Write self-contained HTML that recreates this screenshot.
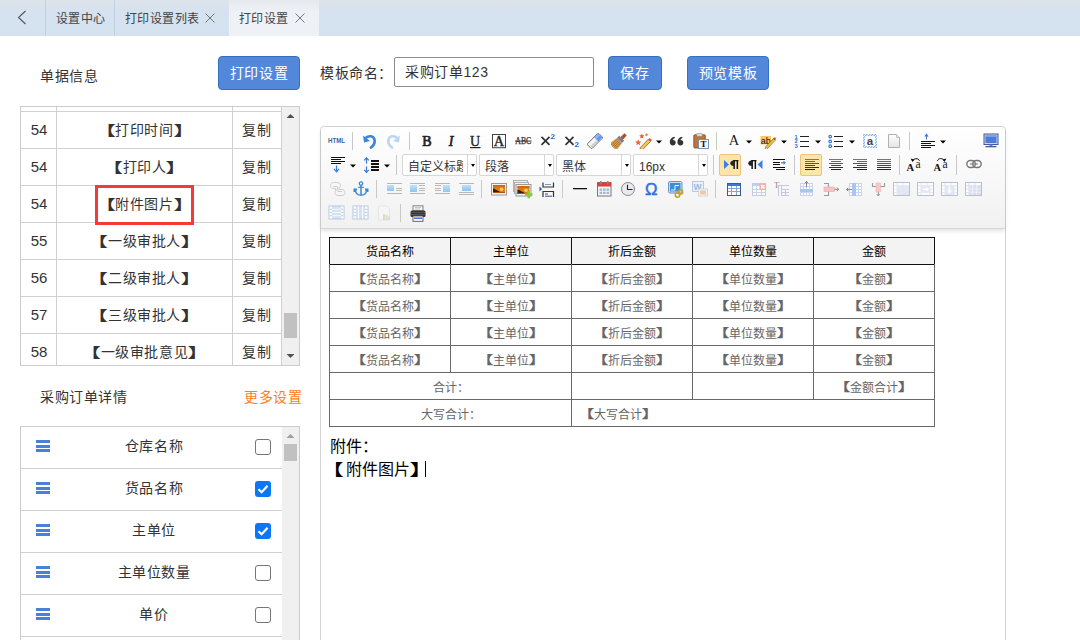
<!DOCTYPE html>
<html lang="zh-CN">
<head>
<meta charset="utf-8">
<style>
*{margin:0;padding:0;box-sizing:border-box}
html,body{width:1080px;height:640px;overflow:hidden;background:#fff;font-family:"Liberation Sans",sans-serif;font-size:14px;color:#333;letter-spacing:0.6px}
#tb,.sel,.th,.tdc,.att,svg{letter-spacing:0}
.abs{position:absolute}
#topbar{position:absolute;left:0;top:0;width:1080px;height:36px;background:linear-gradient(#dde3eb 0,#d6e2ef 12px,#d4e2f0 36px)}
.tab{position:absolute;top:1px;height:36px;line-height:36px;font-size:12px;letter-spacing:0.5px;color:#444;white-space:nowrap}
.sep{position:absolute;top:0;width:1px;height:36px;background:#c3d0de}
.btn{position:absolute;background:#5387d9;border:1px solid #3370bd;border-radius:4px;color:#fff;font-size:14px;font-weight:500;text-align:center}
#lt{position:absolute;left:20px;top:106px;width:280px;height:260px;border:1px solid #ccc;overflow:hidden}
.row{position:absolute;left:0;width:262px;height:37px;border-top:1px solid #d0d0d0}
.cell{position:absolute;top:0;height:36px;line-height:36px;text-align:center;font-size:14px;color:#333}
.vs{position:absolute;width:1px;background:#d0d0d0}
.sb{position:absolute;background:#f0f0f0}
#dt{position:absolute;left:20px;top:426px;width:280px;height:220px;border:1px solid #ccc;overflow:hidden}
.drow{position:absolute;left:0;width:262px;height:42px;border-bottom:1px solid #d0d0d0}
.ham{position:absolute;left:15px;width:14px;height:12px}
.ham i{position:absolute;left:0;width:14px;height:3px;background:#4b80d8}
.cb{position:absolute;left:234px;width:16px;height:16px;border-radius:3px}
.cb.off{border:1px solid #767676;background:#fff}
.cb.on{background:#0b76f7}
#ed{position:absolute;left:320px;top:126px;width:686px;height:530px;border:1px solid #d4d4d4;border-radius:4px;background:#fff}
#tb{position:absolute;left:0;top:0;width:684px;height:102px;border-bottom:1px solid #d8d8d8;background:linear-gradient(#fff,#f1f1f1);border-radius:4px 4px 0 0;box-shadow:0 2px 4px rgba(0,0,0,.12)}
table.t{position:absolute;left:9px;top:111px;border-collapse:collapse;table-layout:fixed}
table.t td{width:121px;height:27px;border:1px solid #666;text-align:center;font-size:12px;color:#555;padding:0}
table.t tr.h td{background:#f3f3f3;border-color:#000;font-weight:bold;color:#111;font-size:13px}
.sel{width:75px;height:22px;border:1px solid #d6d6d6;border-radius:2px;background:#fff;overflow:hidden}
.sel span{position:absolute;left:5px;top:1.5px;width:55px;height:20px;line-height:20px;font-size:12px;color:#333;white-space:nowrap;overflow:hidden}
.sel b{position:absolute;left:64px;top:0;width:10px;height:20px;border-left:1px solid #d6d6d6}
.sel b:after{content:"";position:absolute;left:3px;top:9px;border-left:2.5px solid transparent;border-right:2.5px solid transparent;border-top:3px solid #000}
.th{height:26px;line-height:29px;text-align:center;font-size:12px;font-weight:500;color:#000}
.tdc{height:26px;line-height:30px;text-align:center;font-size:12px;color:#666}
.att{font-size:16px;line-height:20px;color:#000;font-family:"Liberation Serif",serif}
</style>
</head>
<body>
<div id="topbar">
  <svg class="abs" style="left:16px;top:10px" width="12" height="16" viewBox="0 0 12 16"><path d="M9.5 1L2.5 7.5L9.5 14" fill="none" stroke="#555" stroke-width="1.1"/></svg>
  <div class="sep" style="left:45px"></div>
  <div class="tab" style="left:55.5px">设置中心</div>
  <div class="sep" style="left:114px"></div>
  <div class="tab" style="left:124.5px">打印设置列表</div>
  <svg class="abs" style="left:205px;top:13px" width="10" height="10"><path d="M0.5 0.5L9.5 9.5M9.5 0.5L0.5 9.5" stroke="#666" stroke-width="0.9"/></svg>
  <div class="abs" style="left:229px;top:0;width:90px;height:36px;background:linear-gradient(#e6e9ee 0,#eef1f6 12px,#eef2f7 36px)"></div>
  <div class="tab" style="left:238.5px">打印设置</div>
  <svg class="abs" style="left:295px;top:13px" width="10" height="10"><path d="M0.5 0.5L9.5 9.5M9.5 0.5L0.5 9.5" stroke="#666" stroke-width="0.9"/></svg>
</div>

<div class="abs" style="left:40px;top:65px;font-size:14px;color:#333">单据信息</div>
<div class="btn" style="left:218px;top:56px;width:82px;height:34px;line-height:32px">打印设置</div>
<div class="abs" style="left:320px;top:61.5px;font-size:14px;color:#333">模板命名：</div>
<div class="abs" style="left:394px;top:57px;width:200px;height:30px;border:1px solid #8a8a8a;border-radius:2px;padding-left:10px;line-height:28px;font-size:14px;color:#333">采购订单123</div>
<div class="btn" style="left:608px;top:56px;width:54px;height:34px;line-height:32px">保存</div>
<div class="btn" style="left:687px;top:56px;width:82px;height:34px;line-height:32px">预览模板</div>

<div id="lt">
<div class="vs" style="left:35px;top:0;height:260px"></div>
<div class="vs" style="left:211px;top:0;height:260px"></div>
<div class="vs" style="left:260px;top:0;height:260px"></div>
<div class="row" style="top:4px"><div class="cell" style="left:0.5px;width:35px;font-size:15px;line-height:35.5px;letter-spacing:0">54</div><div class="cell" style="left:36px;width:175px"><span style="display:inline-block;transform:scaleX(1.67);transform-origin:86% 50%">【</span>打印时间<span style="display:inline-block;transform:scaleX(1.67);transform-origin:7% 50%">】</span></div><div class="cell" style="left:212px;width:48px">复制</div></div>
<div class="row" style="top:41px"><div class="cell" style="left:0.5px;width:35px;font-size:15px;line-height:35.5px;letter-spacing:0">54</div><div class="cell" style="left:36px;width:175px"><span style="display:inline-block;transform:scaleX(1.67);transform-origin:86% 50%">【</span>打印人<span style="display:inline-block;transform:scaleX(1.67);transform-origin:7% 50%">】</span></div><div class="cell" style="left:212px;width:48px">复制</div></div>
<div class="row" style="top:78px"><div class="cell" style="left:0.5px;width:35px;font-size:15px;line-height:35.5px;letter-spacing:0">54</div><div class="cell" style="left:36px;width:175px"><span style="display:inline-block;transform:scaleX(1.67);transform-origin:86% 50%">【</span>附件图片<span style="display:inline-block;transform:scaleX(1.67);transform-origin:7% 50%">】</span></div><div class="cell" style="left:212px;width:48px">复制</div></div>
<div class="row" style="top:115px"><div class="cell" style="left:0.5px;width:35px;font-size:15px;line-height:35.5px;letter-spacing:0">55</div><div class="cell" style="left:36px;width:175px"><span style="display:inline-block;transform:scaleX(1.67);transform-origin:86% 50%">【</span>一级审批人<span style="display:inline-block;transform:scaleX(1.67);transform-origin:7% 50%">】</span></div><div class="cell" style="left:212px;width:48px">复制</div></div>
<div class="row" style="top:152px"><div class="cell" style="left:0.5px;width:35px;font-size:15px;line-height:35.5px;letter-spacing:0">56</div><div class="cell" style="left:36px;width:175px"><span style="display:inline-block;transform:scaleX(1.67);transform-origin:86% 50%">【</span>二级审批人<span style="display:inline-block;transform:scaleX(1.67);transform-origin:7% 50%">】</span></div><div class="cell" style="left:212px;width:48px">复制</div></div>
<div class="row" style="top:189px"><div class="cell" style="left:0.5px;width:35px;font-size:15px;line-height:35.5px;letter-spacing:0">57</div><div class="cell" style="left:36px;width:175px"><span style="display:inline-block;transform:scaleX(1.67);transform-origin:86% 50%">【</span>三级审批人<span style="display:inline-block;transform:scaleX(1.67);transform-origin:7% 50%">】</span></div><div class="cell" style="left:212px;width:48px">复制</div></div>
<div class="row" style="top:226px"><div class="cell" style="left:0.5px;width:35px;font-size:15px;line-height:35.5px;letter-spacing:0">58</div><div class="cell" style="left:36px;width:175px"><span style="display:inline-block;transform:scaleX(1.67);transform-origin:86% 50%">【</span>一级审批意见<span style="display:inline-block;transform:scaleX(1.67);transform-origin:7% 50%">】</span></div><div class="cell" style="left:212px;width:48px">复制</div></div>
<div class="sb" style="left:261px;top:0;width:17px;height:258px"></div>
<svg class="abs" style="left:265px;top:6px" width="9" height="6"><path d="M0.5 5L4.5 1L8.5 5Z" fill="#505050"/></svg>
<svg class="abs" style="left:265px;top:246px" width="9" height="6"><path d="M0.5 1L4.5 5L8.5 1Z" fill="#505050"/></svg>
<div class="abs" style="left:263px;top:206px;width:13px;height:25px;background:#c1c1c1"></div>
<div class="abs" style="left:74px;top:78px;width:99px;height:40px;border:3px solid #f53838"></div>
</div>

<div class="abs" style="left:40px;top:385.5px;font-size:14px;color:#333">采购订单详情</div>
<div class="abs" style="left:244px;top:385.5px;font-size:14px;color:#ff7d21">更多设置</div>

<div id="dt">
<div class="drow" style="top:0px"><div class="ham" style="top:13px"><i style="top:0"></i><i style="top:5px"></i><i style="top:9px"></i></div><div class="cell" style="left:35px;width:196px;height:41px;line-height:38px">仓库名称</div><div class="cb off" style="top:12px"></div></div>
<div class="drow" style="top:42px"><div class="ham" style="top:13px"><i style="top:0"></i><i style="top:5px"></i><i style="top:9px"></i></div><div class="cell" style="left:35px;width:196px;height:41px;line-height:38px">货品名称</div><div class="cb on" style="top:12px"><svg width="16" height="16" viewBox="0 0 16 16"><path d="M3.5 8.2L6.6 11.2L12.6 4.8" fill="none" stroke="#fff" stroke-width="2.2"/></svg></div></div>
<div class="drow" style="top:84px"><div class="ham" style="top:13px"><i style="top:0"></i><i style="top:5px"></i><i style="top:9px"></i></div><div class="cell" style="left:35px;width:196px;height:41px;line-height:38px">主单位</div><div class="cb on" style="top:12px"><svg width="16" height="16" viewBox="0 0 16 16"><path d="M3.5 8.2L6.6 11.2L12.6 4.8" fill="none" stroke="#fff" stroke-width="2.2"/></svg></div></div>
<div class="drow" style="top:126px"><div class="ham" style="top:13px"><i style="top:0"></i><i style="top:5px"></i><i style="top:9px"></i></div><div class="cell" style="left:35px;width:196px;height:41px;line-height:38px">主单位数量</div><div class="cb off" style="top:12px"></div></div>
<div class="drow" style="top:168px"><div class="ham" style="top:13px"><i style="top:0"></i><i style="top:5px"></i><i style="top:9px"></i></div><div class="cell" style="left:35px;width:196px;height:41px;line-height:38px">单价</div><div class="cb off" style="top:12px"></div></div>
<div class="drow" style="top:210px"></div>
<div class="sb" style="left:261px;top:0;width:17px;height:230px"></div>
<svg class="abs" style="left:265px;top:6px" width="9" height="6"><path d="M0.5 5L4.5 1L8.5 5Z" fill="#a0a0a0"/></svg>
<div class="abs" style="left:263px;top:17px;width:13px;height:17px;background:#c1c1c1"></div>
</div>

<div id="ed">
  <div id="tb"></div>
</div>
<svg class="abs" style="left:327px;top:133px" width="19" height="16" viewBox="0 0 19 16"><text x="1" y="10.2" font-family="Liberation Sans" font-weight="bold" font-size="7.2" fill="#2c69b0" textLength="17" lengthAdjust="spacingAndGlyphs">HTML</text></svg>
<div class="abs" style="left:352px;top:132px;width:1px;height:18px;background:#c8c8c8"></div>
<svg class="abs" style="left:361px;top:133px" width="16" height="16" viewBox="0 0 16 16"><path d="M4.5 5.2C7.5 2.2 12.8 2.6 13.6 7C14.2 10.4 12 13 10 14.6" fill="none" stroke="#3b86da" stroke-width="2.6" stroke-linecap="round"/><path d="M2 2.5L3 9.5L9 8Z" fill="#3b86da"/></svg>
<svg class="abs" style="left:386px;top:133px" width="16" height="16" viewBox="0 0 16 16"><path d="M11.5 5.2C8.5 2.2 3.2 2.6 2.4 7C1.8 10.4 4 13 6 14.6" fill="none" stroke="#bcd7f2" stroke-width="2.6" stroke-linecap="round"/><path d="M14 2.5L13 9.5L7 8Z" fill="#bcd7f2"/></svg>
<div class="abs" style="left:409px;top:132px;width:1px;height:18px;background:#c8c8c8"></div>
<svg class="abs" style="left:419px;top:133px" width="16" height="16" viewBox="0 0 16 16"><text x="8" y="13" text-anchor="middle" font-family="Liberation Serif" font-size="14" stroke="#222" stroke-width="0.7" fill="#222">B</text></svg>
<svg class="abs" style="left:443px;top:133px" width="16" height="16" viewBox="0 0 16 16"><text x="8" y="13" text-anchor="middle" font-family="Liberation Serif" font-style="italic" font-size="14" stroke="#222" stroke-width="0.6" fill="#222">I</text></svg>
<svg class="abs" style="left:467px;top:133px" width="16" height="16" viewBox="0 0 16 16"><text x="8" y="12.6" text-anchor="middle" font-family="Liberation Serif" font-size="14" stroke="#222" stroke-width="0.35" fill="#222">U</text><rect x="3" y="14" width="10.5" height="1.2" fill="#222"/></svg>
<svg class="abs" style="left:491px;top:133px" width="16" height="16" viewBox="0 0 16 16"><rect x="1.5" y="1.5" width="13" height="13.2" fill="none" stroke="#444" stroke-width="1"/><text x="8" y="13" text-anchor="middle" font-family="Liberation Serif" font-size="14.5" stroke="#222" stroke-width="0.35" fill="#222">A</text></svg>
<svg class="abs" style="left:515px;top:133px" width="17" height="16" viewBox="0 0 17 16"><text x="0.3" y="11.4" font-family="Liberation Serif" font-size="9.5" stroke="#333" stroke-width="0.25" fill="#333" textLength="16" lengthAdjust="spacingAndGlyphs">ABC</text><rect x="0" y="7.6" width="16.5" height="1" fill="#333"/></svg>
<svg class="abs" style="left:539px;top:133px" width="18" height="16" viewBox="0 0 18 16"><path d="M2.5 3.8L10.5 11.8M10.5 3.8L2.5 11.8" stroke="#333" stroke-width="1.7"/><text x="11.6" y="5.8" font-family="Liberation Sans" font-weight="bold" font-size="8" fill="#1e6fe0">2</text></svg>
<svg class="abs" style="left:563px;top:133px" width="18" height="16" viewBox="0 0 18 16"><path d="M2.5 3.8L10.5 11.8M10.5 3.8L2.5 11.8" stroke="#333" stroke-width="1.7"/><text x="11.6" y="14.3" font-family="Liberation Sans" font-weight="bold" font-size="8" fill="#1e6fe0">2</text></svg>
<svg class="abs" style="left:587px;top:133px" width="16" height="16" viewBox="0 0 16 16"><g transform="rotate(-45 8 8)"><rect x="0" y="4.6" width="16" height="6.6" rx="1" fill="#f4f4f4" stroke="#5e6270" stroke-width="0.9"/><rect x="10" y="5.1" width="5.5" height="5.6" fill="#5a9af0"/><rect x="10" y="5.1" width="5.5" height="2.6" fill="#8ab8f8"/><rect x="1" y="8.5" width="9" height="2.2" fill="#d0d0d0"/></g></svg>
<svg class="abs" style="left:611px;top:133px" width="16" height="16" viewBox="0 0 16 16"><g transform="rotate(45 8 8)"><rect x="6.3" y="-1.5" width="3.4" height="6" rx="0.8" fill="#a8582a"/><rect x="4.5" y="4.2" width="7" height="3.3" fill="#6a7088"/><path d="M5.3 5H10.7M5.3 6.6H10.7" stroke="#c8ccd8" stroke-width="0.6" stroke-dasharray="0.8 0.8"/><path d="M4.3 7.5H11.7L13 16.5H3Z" fill="#d8a050"/><path d="M5.5 8V16M7.2 8V16.5M8.8 8V16.5M10.5 8V16" stroke="#9a5a20" stroke-width="0.7"/></g></svg>
<svg class="abs" style="left:635px;top:133px" width="17" height="16" viewBox="0 0 17 16"><path d="M4.8 15.2L13.2 6.3L15.6 8.5L7.2 17Z" fill="#f4c450" stroke="#7a5a20" stroke-width="0.7"/><path d="M13.2 6.3L14.6 4.9L17 7.1L15.6 8.5Z" fill="#e85050"/><polygon points="3.20,6.30 4.07,8.40 6.34,8.58 4.61,10.06 5.14,12.27 3.20,11.08 1.26,12.27 1.79,10.06 0.06,8.58 2.33,8.40" fill="#f0602a"/><polygon points="6.80,0.40 7.54,2.18 9.46,2.33 8.00,3.59 8.45,5.47 6.80,4.46 5.15,5.47 5.60,3.59 4.14,2.33 6.06,2.18" fill="#e8562a"/><polygon points="11.50,-0.10 12.00,1.11 13.31,1.21 12.31,2.06 12.62,3.34 11.50,2.66 10.38,3.34 10.69,2.06 9.69,1.21 11.00,1.11" fill="#f07a50"/></svg>
<svg class="abs" style="left:656px;top:140px" width="6" height="4" viewBox="0 0 6 4"><path d="M0 0.5H6L3 3.5Z" fill="#000"/></svg>
<svg class="abs" style="left:669px;top:133px" width="16" height="16" viewBox="0 0 16 16"><g fill="#333"><path d="M5 3.8C2.4 4.6 0.8 6.6 0.8 9C0.8 11.2 2.1 12.4 3.8 12.4C5.4 12.4 6.7 11.3 6.7 9.7C6.7 8.2 5.6 7.1 4.2 7.1L3.7 7.15C4 6.1 4.9 5.2 6.2 4.7Z"/><path d="M12.6 3.8C10 4.6 8.4 6.6 8.4 9C8.4 11.2 9.7 12.4 11.4 12.4C13 12.4 14.3 11.3 14.3 9.7C14.3 8.2 13.2 7.1 11.8 7.1L11.3 7.15C11.6 6.1 12.5 5.2 13.8 4.7Z"/></g></svg>
<svg class="abs" style="left:693px;top:133px" width="16" height="16" viewBox="0 0 16 16"><rect x="0.8" y="1.8" width="11.5" height="13.2" rx="1" fill="#c0743a" stroke="#7a4a20" stroke-width="0.8"/><rect x="3.8" y="0.5" width="5.5" height="2.8" rx="0.6" fill="#e0e0e0" stroke="#888" stroke-width="0.6"/><rect x="5.5" y="6.5" width="10" height="9" fill="#f6f8fc" stroke="#6a88b8" stroke-width="0.9"/><text x="10.5" y="14.3" text-anchor="middle" font-family="Liberation Serif" font-weight="bold" font-size="9" fill="#111">T</text></svg>
<div class="abs" style="left:716px;top:132px;width:1px;height:18px;background:#c8c8c8"></div>
<svg class="abs" style="left:726px;top:133px" width="16" height="16" viewBox="0 0 16 16"><text x="8" y="12" text-anchor="middle" font-family="Liberation Serif" font-size="14.5" fill="#222">A</text></svg>
<svg class="abs" style="left:746px;top:140px" width="6" height="4" viewBox="0 0 6 4"><path d="M0 0.5H6L3 3.5Z" fill="#000"/></svg>
<svg class="abs" style="left:760px;top:133px" width="17" height="16" viewBox="0 0 17 16"><rect x="0.5" y="3" width="10.5" height="8.5" fill="#fbc56a"/><text x="0.8" y="10.6" font-family="Liberation Sans" font-size="8.8" fill="#111" textLength="10" lengthAdjust="spacingAndGlyphs">ab</text><path d="M5.5 13.8L13.5 5.5L15.3 7.3L7.3 15.6Z" fill="#f0c040" stroke="#6a5a30" stroke-width="0.6"/><circle cx="14.6" cy="5.8" r="1.3" fill="#e03838"/><path d="M5.2 14.2L4.5 15.8L6.2 15.3Z" fill="#333"/></svg>
<svg class="abs" style="left:781px;top:140px" width="6" height="4" viewBox="0 0 6 4"><path d="M0 0.5H6L3 3.5Z" fill="#000"/></svg>
<svg class="abs" style="left:794px;top:133px" width="16" height="16" viewBox="0 0 16 16"><text x="0.5" y="5.6" font-family="Liberation Sans" font-weight="bold" font-size="5.8" fill="#2a70e0">1</text><text x="0.5" y="10.4" font-family="Liberation Sans" font-weight="bold" font-size="5.8" fill="#2a70e0">2</text><text x="0.5" y="15.2" font-family="Liberation Sans" font-weight="bold" font-size="5.8" fill="#2a70e0">3</text><g shape-rendering="crispEdges" fill="#222"><rect x="6" y="3" width="9" height="1.2"/><rect x="6" y="8" width="9" height="1.2"/><rect x="6" y="13" width="9" height="1.2"/></g></svg>
<svg class="abs" style="left:815px;top:140px" width="6" height="4" viewBox="0 0 6 4"><path d="M0 0.5H6L3 3.5Z" fill="#000"/></svg>
<svg class="abs" style="left:828px;top:133px" width="16" height="16" viewBox="0 0 16 16"><circle cx="2.2" cy="3.6" r="1.3" fill="none" stroke="#2a70e0" stroke-width="1.1"/><circle cx="2.2" cy="8.4" r="1.3" fill="none" stroke="#2a70e0" stroke-width="1.1"/><circle cx="2.2" cy="13.2" r="1.3" fill="none" stroke="#2a70e0" stroke-width="1.1"/><g shape-rendering="crispEdges" fill="#222"><rect x="6" y="3" width="9" height="1.2"/><rect x="6" y="8" width="9" height="1.2"/><rect x="6" y="13" width="9" height="1.2"/></g></svg>
<svg class="abs" style="left:849px;top:140px" width="6" height="4" viewBox="0 0 6 4"><path d="M0 0.5H6L3 3.5Z" fill="#000"/></svg>
<svg class="abs" style="left:862px;top:133px" width="16" height="16" viewBox="0 0 16 16"><defs><pattern id="hatch" width="2" height="2" patternUnits="userSpaceOnUse" patternTransform="rotate(45)"><rect width="1" height="2" fill="#7aa8ec"/></pattern></defs><path d="M1 1H15V15H1Z M3 3V13H13V3Z" fill="url(#hatch)" fill-rule="evenodd"/><text x="8" y="12" text-anchor="middle" font-family="Liberation Sans" font-weight="bold" font-size="11.5" fill="#444">a</text></svg>
<svg class="abs" style="left:886px;top:133px" width="16" height="16" viewBox="0 0 16 16"><defs><linearGradient id="pg" x1="0" y1="0" x2="0" y2="1"><stop offset="0" stop-color="#fff"/><stop offset="1" stop-color="#e4e4e4"/></linearGradient></defs><path d="M2.5 1.5H10.5L13.5 4.5V14.5H2.5Z" fill="url(#pg)" stroke="#a8a8a8" stroke-width="0.9"/><path d="M10.5 1.5V4.5H13.5" fill="#eee" stroke="#b8b8b8" stroke-width="0.8"/></svg>
<div class="abs" style="left:909px;top:132px;width:1px;height:18px;background:#c8c8c8"></div>
<svg class="abs" style="left:920px;top:133px" width="16" height="16" viewBox="0 0 16 16"><path d="M6.5 1V6.5" stroke="#3a78e0" stroke-width="1.1"/><path d="M4.3 3.6L6.5 0.5L8.7 3.6Z" fill="#3a78e0"/><g shape-rendering="crispEdges"><rect x="1" y="8" width="14" height="1" fill="#111"/><rect x="1" y="10" width="10" height="1" fill="#111"/><rect x="1" y="12" width="14" height="1.2" fill="#111"/><rect x="1" y="14" width="10" height="1.2" fill="#111"/></g></svg>
<svg class="abs" style="left:940px;top:140px" width="6" height="4" viewBox="0 0 6 4"><path d="M0 0.5H6L3 3.5Z" fill="#000"/></svg>
<svg class="abs" style="left:983px;top:133px" width="16" height="16" viewBox="0 0 16 16"><rect x="1" y="1" width="14" height="10.5" fill="#c8d4ec" stroke="#3c5a9c" stroke-width="1"/><rect x="2.5" y="2.5" width="11" height="7.5" fill="#4f7ad8"/><rect x="2.5" y="2.5" width="11" height="1.5" fill="#7aa0ec"/><rect x="6.5" y="11.5" width="3" height="1.5" fill="#6a80b0"/><rect x="2.5" y="13" width="11" height="1.3" fill="#3c5a9c"/></svg>
<svg class="abs" style="left:331px;top:157px" width="16" height="16" viewBox="0 0 16 16"><g shape-rendering="crispEdges"><rect x="0" y="0" width="14" height="1" fill="#111"/><rect x="0" y="2" width="10" height="1" fill="#111"/><rect x="0" y="4" width="14" height="1" fill="#111"/><rect x="0" y="6" width="10" height="1" fill="#111"/></g><path d="M5.5 8.5V14.5" stroke="#3a7ae0" stroke-width="1.2"/><path d="M3 11.8L5.5 14.8L8 11.8" fill="none" stroke="#3a7ae0" stroke-width="1.2"/></svg>
<svg class="abs" style="left:350px;top:164px" width="6" height="4" viewBox="0 0 6 4"><path d="M0 0.5H6L3 3.5Z" fill="#000"/></svg>
<svg class="abs" style="left:363px;top:157px" width="17" height="17" viewBox="0 0 17 17"><g shape-rendering="crispEdges"><rect x="8" y="3" width="8" height="1.5" fill="#111"/><rect x="8" y="6" width="8" height="1.5" fill="#111"/><rect x="8" y="9" width="8" height="1.5" fill="#111"/><rect x="8" y="12" width="8" height="1.5" fill="#111"/></g><path d="M3.5 1V6.5M3.5 9.5V15.5" stroke="#3a7ae0" stroke-width="1.2"/><path d="M1.2 3.4L3.5 0.8L5.8 3.4M1.2 12.8L3.5 15.4L5.8 12.8" fill="none" stroke="#3a7ae0" stroke-width="1.2"/></svg>
<svg class="abs" style="left:384px;top:164px" width="6" height="4" viewBox="0 0 6 4"><path d="M0 0.5H6L3 3.5Z" fill="#000"/></svg>
<div class="abs" style="left:396px;top:155px;width:1px;height:20px;background:#c8c8c8"></div>
<div class="abs sel" style="left:402px;top:154px"><span>自定义标题</span><b></b></div>
<div class="abs sel" style="left:479px;top:154px"><span>段落</span><b></b></div>
<div class="abs sel" style="left:556px;top:154px"><span>黑体</span><b></b></div>
<div class="abs sel" style="left:633px;top:154px"><span>16px</span><b></b></div>
<div class="abs" style="left:713px;top:155px;width:1px;height:20px;background:#c8c8c8"></div>
<div class="abs" style="left:719px;top:154px;width:22px;height:22px;background:#fde4a8;border:1px solid #f1c37a;border-radius:2px"></div>
<svg class="abs" style="left:724px;top:160px" width="16" height="10" viewBox="0 0 16 10"><path d="M0 0L5 4.5L0 9Z" fill="#3a80e8"/><g transform="translate(6,0)"><path d="M3.8 0.5C1.2 0.5 0.3 2 0.3 3.3C0.3 4.9 1.5 6 3.8 6Z" fill="#222"/><rect x="3.4" y="0" width="5" height="1.3" fill="#222"/><rect x="3.4" y="0" width="1.5" height="9" fill="#111"/><rect x="6.6" y="0" width="1.5" height="9" fill="#111"/></g></svg>
<svg class="abs" style="left:748px;top:160px" width="16" height="10" viewBox="0 0 16 10"><g transform="translate(0,0)"><path d="M3.8 0.5C1.2 0.5 0.3 2 0.3 3.3C0.3 4.9 1.5 6 3.8 6Z" fill="#222"/><rect x="3.4" y="0" width="5" height="1.3" fill="#222"/><rect x="3.4" y="0" width="1.5" height="9" fill="#111"/><rect x="6.6" y="0" width="1.5" height="9" fill="#111"/></g><path d="M14.5 0L9.5 4.5L14.5 9Z" fill="#3a80e8"/></svg>
<svg class="abs" style="left:773px;top:159px" width="14" height="12" viewBox="0 0 14 12"><g shape-rendering="crispEdges"><rect x="0" y="0" width="12" height="1" fill="#111"/><rect x="0" y="2.5" width="7" height="1" fill="#111"/><rect x="0" y="5" width="7" height="1" fill="#111"/><rect x="0" y="7.5" width="12" height="1" fill="#111"/><rect x="3" y="10" width="9" height="1" fill="#111"/></g><path d="M8 3.8H11.5" stroke="#3a80e8" stroke-width="1.2"/><path d="M10.5 1.8L13 3.8L10.5 5.8Z" fill="#3a80e8"/></svg>
<div class="abs" style="left:794px;top:155px;width:1px;height:20px;background:#c8c8c8"></div>
<div class="abs" style="left:800px;top:154px;width:22px;height:22px;background:#fde4a8;border:1px solid #f1c37a;border-radius:2px"></div>
<svg class="abs" style="left:805px;top:159px" width="14" height="12" viewBox="0 0 14 12"><g shape-rendering="crispEdges"><rect x="0" y="0" width="14" height="1" fill="#777"/><rect x="0" y="2" width="10" height="1" fill="#666"/><rect x="0" y="4" width="14" height="1" fill="#555"/><rect x="0" y="6" width="10" height="1" fill="#444"/><rect x="0" y="8" width="14" height="1" fill="#333"/><rect x="0" y="10" width="10" height="1" fill="#222"/></g></svg>
<svg class="abs" style="left:829px;top:159px" width="14" height="12" viewBox="0 0 14 12"><g shape-rendering="crispEdges"><rect x="0" y="0" width="14" height="1" fill="#777"/><rect x="2" y="2" width="10" height="1" fill="#666"/><rect x="0" y="4" width="14" height="1" fill="#555"/><rect x="2" y="6" width="10" height="1" fill="#444"/><rect x="0" y="8" width="14" height="1" fill="#333"/><rect x="2" y="10" width="10" height="1" fill="#222"/></g></svg>
<svg class="abs" style="left:853px;top:159px" width="14" height="12" viewBox="0 0 14 12"><g shape-rendering="crispEdges"><rect x="0" y="0" width="14" height="1" fill="#777"/><rect x="4" y="2" width="10" height="1" fill="#666"/><rect x="0" y="4" width="14" height="1" fill="#555"/><rect x="4" y="6" width="10" height="1" fill="#444"/><rect x="0" y="8" width="14" height="1" fill="#333"/><rect x="4" y="10" width="10" height="1" fill="#222"/></g></svg>
<svg class="abs" style="left:877px;top:159px" width="14" height="12" viewBox="0 0 14 12"><g shape-rendering="crispEdges"><rect x="0" y="0" width="14" height="1" fill="#777"/><rect x="0" y="2" width="14" height="1" fill="#666"/><rect x="0" y="4" width="14" height="1" fill="#555"/><rect x="0" y="6" width="14" height="1" fill="#444"/><rect x="0" y="8" width="14" height="1" fill="#333"/><rect x="0" y="10" width="14" height="1" fill="#222"/></g></svg>
<div class="abs" style="left:899px;top:155px;width:1px;height:20px;background:#c8c8c8"></div>
<svg class="abs" style="left:906px;top:156px" width="17" height="16" viewBox="0 0 17 16"><text x="0.5" y="14.5" font-family="Liberation Serif" font-weight="bold" font-size="10.5" fill="#111">A</text><text x="9.6" y="12.3" font-family="Liberation Serif" font-size="11.5" fill="#111">a</text><path d="M7 4.8C7.5 2.2 12.5 1.8 13.5 4.8" fill="none" stroke="#111" stroke-width="1"/><path d="M4.5 2.5L6.5 6L8.5 3.5Z" fill="#111"/></svg>
<svg class="abs" style="left:933px;top:156px" width="17" height="16" viewBox="0 0 17 16"><text x="0.5" y="14.5" font-family="Liberation Serif" font-weight="bold" font-size="10.5" fill="#111">A</text><text x="9.6" y="12.3" font-family="Liberation Serif" font-size="11.5" fill="#111">a</text><path d="M4.5 4.8C5 2 10 1.8 11 4.5" fill="none" stroke="#111" stroke-width="1"/><path d="M9.5 3.5L11.5 6L13.5 2.5Z" fill="#111"/></svg>
<div class="abs" style="left:956px;top:155px;width:1px;height:20px;background:#c8c8c8"></div>
<svg class="abs" style="left:966px;top:159px" width="16" height="10" viewBox="0 0 16 10"><rect x="0.8" y="1.5" width="8.5" height="7" rx="3.5" fill="none" stroke="#777" stroke-width="1.4"/><rect x="6.7" y="1.5" width="8.5" height="7" rx="3.5" fill="none" stroke="#777" stroke-width="1.4"/><path d="M4 5H12" stroke="#888" stroke-width="1.2"/></svg>
<svg class="abs" style="left:330px;top:181px" width="16" height="16" viewBox="0 0 16 16"><g fill="none" stroke="#cdcdcd" stroke-width="1"><path d="M5.5 7.5H3.5C1.8 7.5 0.5 6.2 0.5 4.5C0.5 2.8 1.8 1.5 3.5 1.5H7.5C9.2 1.5 10.5 2.8 10.5 4.5C10.5 6.2 9.2 7.5 7.5 7.5"/><path d="M7.5 7.5V5.5H3.5M5.5 7.5V9.5"/><path d="M9.5 8.5H12C13.7 8.5 15 9.8 15 11.5C15 13.2 13.7 14.5 12 14.5H8C6.3 14.5 5 13.2 5 11.5C5 9.8 6.3 8.5 8 8.5"/><path d="M8 8.5V10.5H12M9.5 8.5V7.5"/></g></svg>
<svg class="abs" style="left:353px;top:181px" width="16" height="16" viewBox="0 0 16 16"><circle cx="8" cy="2.6" r="1.7" fill="none" stroke="#3a86da" stroke-width="1.3"/><path d="M8 4.3V14" stroke="#3a86da" stroke-width="1.5"/><path d="M5 6.3H11" stroke="#3a86da" stroke-width="1.1"/><path d="M2.3 9C2.8 12.3 5 14.3 8 14.3C11 14.3 13.2 12.3 13.7 9" fill="none" stroke="#4a90e0" stroke-width="1.6"/><path d="M0.5 7.5H4V9.5H2.5V11H0.5Z M15.5 7.5H12V9.5H13.5V11H15.5Z" fill="#3a86da"/></svg>
<div class="abs" style="left:376px;top:180px;width:1px;height:18px;background:#c8c8c8"></div>
<svg class="abs" style="left:387px;top:181px" width="16" height="16" viewBox="0 0 16 16"><defs><linearGradient id="ig" x1="0" y1="0" x2="0" y2="1"><stop offset="0" stop-color="#c4e2fa"/><stop offset="1" stop-color="#8ec4ee"/></linearGradient></defs><g shape-rendering="crispEdges"><rect x="0" y="2" width="15" height="1" fill="#b8b8b8"/><rect x="0" y="4" width="7" height="6" fill="url(#ig)"/><rect x="9" y="7" width="6" height="1" fill="#b8b8b8"/><rect x="9" y="9" width="6" height="1" fill="#b8b8b8"/><rect x="0" y="12" width="15" height="1" fill="#b8b8b8"/></g></svg>
<svg class="abs" style="left:410px;top:181px" width="16" height="16" viewBox="0 0 16 16"><defs><linearGradient id="ig" x1="0" y1="0" x2="0" y2="1"><stop offset="0" stop-color="#c4e2fa"/><stop offset="1" stop-color="#8ec4ee"/></linearGradient></defs><g shape-rendering="crispEdges"><rect x="0" y="2" width="15" height="1" fill="#b8b8b8"/><rect x="0" y="4" width="7" height="7" fill="url(#ig)"/><rect x="9" y="4" width="6" height="1" fill="#b8b8b8"/><rect x="9" y="6.5" width="6" height="1" fill="#b8b8b8"/><rect x="9" y="9" width="6" height="1" fill="#b8b8b8"/><rect x="0" y="12" width="15" height="1" fill="#b8b8b8"/></g></svg>
<svg class="abs" style="left:435px;top:181px" width="16" height="16" viewBox="0 0 16 16"><defs><linearGradient id="ig" x1="0" y1="0" x2="0" y2="1"><stop offset="0" stop-color="#c4e2fa"/><stop offset="1" stop-color="#8ec4ee"/></linearGradient></defs><g shape-rendering="crispEdges"><rect x="0" y="2" width="15" height="1" fill="#b8b8b8"/><rect x="8" y="4" width="7" height="7" fill="url(#ig)"/><rect x="0" y="4" width="6" height="1" fill="#b8b8b8"/><rect x="0" y="6.5" width="6" height="1" fill="#b8b8b8"/><rect x="0" y="9" width="6" height="1" fill="#b8b8b8"/><rect x="0" y="12" width="15" height="1" fill="#b8b8b8"/></g></svg>
<svg class="abs" style="left:459px;top:181px" width="16" height="16" viewBox="0 0 16 16"><defs><linearGradient id="ig" x1="0" y1="0" x2="0" y2="1"><stop offset="0" stop-color="#c4e2fa"/><stop offset="1" stop-color="#8ec4ee"/></linearGradient></defs><g shape-rendering="crispEdges"><rect x="0" y="2" width="15" height="1" fill="#b8b8b8"/><rect x="3" y="3.5" width="9" height="6" fill="url(#ig)"/><rect x="0" y="11" width="15" height="1" fill="#b8b8b8"/><rect x="0" y="13" width="15" height="1" fill="#b8b8b8"/></g></svg>
<div class="abs" style="left:481px;top:180px;width:1px;height:18px;background:#c8c8c8"></div>
<svg class="abs" style="left:491px;top:183px" width="16" height="13" viewBox="0 0 16 13"><rect x="0.5" y="0.5" width="15" height="11.5" fill="#f2f2f2" stroke="#999" stroke-width="1"/><rect x="2" y="2" width="12" height="8" fill="#e07a18"/><rect x="2" y="2" width="12" height="2" fill="#d06818"/><circle cx="10.5" cy="6.3" r="1.8" fill="#f8d060"/><path d="M2 5.5C5 6.5 8 8 10 10H2Z" fill="#3a2010"/><rect x="2" y="9" width="12" height="1" fill="#b05010"/></svg>
<svg class="abs" style="left:513px;top:180px" width="20" height="19" viewBox="0 0 20 19"><rect x="0.5" y="0.5" width="14" height="11" fill="#f0f0f0" stroke="#aaa" stroke-width="0.9"/><rect x="1.5" y="2.5" width="14" height="11" fill="#f0f0f0" stroke="#aaa" stroke-width="0.9"/><g transform="translate(2.5,4)"><rect x="0.5" y="0.5" width="15" height="11.5" fill="#f2f2f2" stroke="#999" stroke-width="1"/><rect x="2" y="2" width="12" height="8" fill="#e07a18"/><rect x="2" y="2" width="12" height="2" fill="#d06818"/><circle cx="10.5" cy="6.3" r="1.8" fill="#f8d060"/><path d="M2 5.5C5 6.5 8 8 10 10H2Z" fill="#3a2010"/><rect x="2" y="9" width="12" height="1" fill="#b05010"/></g><path d="M16 12.5H18.5V15H21V17.5H18.5V20H16V17.5H13.5V15H16Z" transform="translate(-1.5,-1.8) scale(1)" fill="#8acc30"/></svg>
<svg class="abs" style="left:539px;top:182px" width="16" height="16" viewBox="0 0 16 16"><path d="M4 0.5V5H14.5V0.5" fill="none" stroke="#333" stroke-width="1.2"/><path d="M6 2.5H12" stroke="#7a9ac0" stroke-width="1"/><path d="M4 15V9.5H14.5V15" fill="none" stroke="#333" stroke-width="1.2"/><path d="M6 12H9" stroke="#555" stroke-width="1"/><path d="M6 14.2H13" stroke="#2a50b0" stroke-width="1"/><path d="M0.5 4.5L3 7L0.5 9.5Z" fill="#2a50c8"/></svg>
<div class="abs" style="left:562px;top:180px;width:1px;height:18px;background:#c8c8c8"></div>
<svg class="abs" style="left:573px;top:187px" width="15" height="3" viewBox="0 0 15 3"><rect x="0" y="1" width="14" height="1.3" fill="#111"/></svg>
<svg class="abs" style="left:597px;top:181px" width="15" height="16" viewBox="0 0 15 16"><rect x="0.5" y="1.5" width="13.5" height="13.5" fill="#f4f6fa" stroke="#777" stroke-width="1"/><rect x="0.5" y="1.5" width="13.5" height="4" fill="#e83838"/><rect x="3" y="0" width="1.5" height="3.5" fill="#888"/><rect x="10" y="0" width="1.5" height="3.5" fill="#888"/><g fill="#a8b8cc"><rect x="2.5" y="7.5" width="2.7" height="2.3"/><rect x="6" y="7.5" width="2.7" height="2.3"/><rect x="9.5" y="7.5" width="2.7" height="2.3"/><rect x="2.5" y="10.7" width="2.7" height="2.3"/><rect x="6" y="10.7" width="2.7" height="2.3"/><rect x="9.5" y="10.7" width="2.7" height="2.3"/></g></svg>
<svg class="abs" style="left:621px;top:182px" width="15" height="15" viewBox="0 0 15 15"><circle cx="7" cy="7" r="6.5" fill="#e8eaee" stroke="#8a8a8a" stroke-width="1"/><path d="M6.5 2.8V7.5H11.5" fill="none" stroke="#222" stroke-width="1.1"/></svg>
<svg class="abs" style="left:643px;top:181px" width="17" height="16" viewBox="0 0 17 16"><text x="2" y="13.6" font-family="Liberation Sans" font-size="16" stroke="#2a72e4" stroke-width="0.5" fill="#2a72e4" textLength="12.5" lengthAdjust="spacingAndGlyphs">Ω</text></svg>
<svg class="abs" style="left:668px;top:181px" width="17" height="17" viewBox="0 0 17 17"><rect x="0.5" y="0.5" width="13.5" height="11.5" rx="1.5" fill="#cfe0f4" stroke="#6a90c8" stroke-width="1"/><rect x="2" y="2" width="10.5" height="8.5" fill="#3a8ed4"/><path d="M3 9H7V4.5H11" fill="none" stroke="#e8f4ff" stroke-width="1"/><circle cx="12.5" cy="11" r="2.2" fill="none" stroke="#c8a020" stroke-width="1.5"/><circle cx="9.5" cy="14" r="2.2" fill="none" stroke="#c8a020" stroke-width="1.5"/></svg>
<svg class="abs" style="left:692px;top:181px" width="16" height="16" viewBox="0 0 16 16"><rect x="0.5" y="0.5" width="11" height="10" fill="#eaf1fa" stroke="#b0c4e0" stroke-width="0.9"/><text x="1.5" y="8.8" font-family="Liberation Sans" font-weight="bold" font-size="8.5" fill="#9ab8e0">W</text><rect x="6.5" y="8" width="9" height="7" fill="#f4f4f4" stroke="#cfcfcf" stroke-width="0.8"/><rect x="8" y="9.5" width="6" height="4" fill="#f0c8a8"/></svg>
<div class="abs" style="left:715px;top:180px;width:1px;height:18px;background:#c8c8c8"></div>
<svg class="abs" style="left:727px;top:181px" width="16" height="16" viewBox="0 0 16 16"><g shape-rendering="crispEdges"><rect x="0.5" y="2.5" width="13" height="12" fill="#fff" stroke="#3a5aa0" stroke-width="1"/><rect x="1" y="3" width="12" height="2" fill="#3a78e0"/><path d="M1 7.5H13M1 10.5H13M4.5 5V14M9.5 5V14" stroke="#8ea4cc" stroke-width="1"/></g></svg>
<svg class="abs" style="left:752px;top:181px" width="16" height="16" viewBox="0 0 16 16"><g opacity="0.55" shape-rendering="crispEdges"><rect x="0.5" y="2.5" width="13" height="11.5" fill="#fff" stroke="#9aaccc" stroke-width="1"/><rect x="1" y="3" width="12" height="2" fill="#8ab0f0"/><path d="M1 8H13M1 11H13M4.5 5V14M9 5V14" stroke="#a8b8d4" stroke-width="1"/></g><rect x="7.5" y="2.5" width="6.5" height="6.5" fill="#f4a8a8"/><path d="M9 4L12.5 7.5M12.5 4L9 7.5" stroke="#fff" stroke-width="1.6"/></svg>
<svg class="abs" style="left:774px;top:181px" width="16" height="16" viewBox="0 0 16 16"><text x="0" y="7" font-family="Liberation Serif" font-size="8.5" fill="#888">T</text><g opacity="0.6" shape-rendering="crispEdges"><path d="M4.5 4.5V14.5M4 4.5H15M7.5 4.5V14.5M7.5 8H15M7.5 11H15M11 8V14.5M7.5 14H15" stroke="#98aed0" stroke-width="1"/></g></svg>
<svg class="abs" style="left:800px;top:181px" width="16" height="16" viewBox="0 0 16 16"><g shape-rendering="crispEdges"><rect x="0" y="2" width="13" height="13" fill="#c9d5ee"/><rect x="1" y="3" width="2" height="2" fill="#fff"/><rect x="4" y="3" width="2" height="2" fill="#fff"/><rect x="7" y="3" width="2" height="2" fill="#fff"/><rect x="10" y="3" width="2" height="2" fill="#fff"/><rect x="1" y="6" width="2" height="2" fill="#fff"/><rect x="4" y="6" width="2" height="2" fill="#fff"/><rect x="7" y="6" width="2" height="2" fill="#fff"/><rect x="10" y="6" width="2" height="2" fill="#fff"/><rect x="1" y="9" width="2" height="2" fill="#fff"/><rect x="4" y="9" width="2" height="2" fill="#fff"/><rect x="7" y="9" width="2" height="2" fill="#fff"/><rect x="10" y="9" width="2" height="2" fill="#fff"/><rect x="1" y="12" width="2" height="2" fill="#fff"/><rect x="4" y="12" width="2" height="2" fill="#fff"/><rect x="7" y="12" width="2" height="2" fill="#fff"/><rect x="10" y="12" width="2" height="2" fill="#fff"/><rect x="0" y="8" width="13" height="3" fill="#a9c6f2"/></g><path d="M6.5 0.5V6" stroke="#888" stroke-width="1"/><path d="M4.8 2.3L6.5 0.3L8.2 2.3" fill="none" stroke="#888" stroke-width="1"/></svg>
<svg class="abs" style="left:823px;top:181px" width="17" height="16" viewBox="0 0 17 16"><path d="M1 2.5H5.5V14.5H1" fill="none" stroke="#999" stroke-width="1.1"/><rect x="1" y="6" width="10.5" height="4.5" fill="#f6c4c4" stroke="#e8a8a8" stroke-width="0.6"/><path d="M11.5 8.3H15.5" stroke="#888" stroke-width="1"/><path d="M13.8 6.6L15.8 8.3L13.8 10" fill="none" stroke="#888" stroke-width="1"/></svg>
<svg class="abs" style="left:846px;top:181px" width="17" height="16" viewBox="0 0 17 16"><g shape-rendering="crispEdges"><rect x="3" y="2" width="13" height="13" fill="#c9d5ee"/><rect x="4" y="3" width="2" height="2" fill="#fff"/><rect x="7" y="3" width="2" height="2" fill="#fff"/><rect x="10" y="3" width="2" height="2" fill="#fff"/><rect x="13" y="3" width="2" height="2" fill="#fff"/><rect x="4" y="6" width="2" height="2" fill="#fff"/><rect x="7" y="6" width="2" height="2" fill="#fff"/><rect x="10" y="6" width="2" height="2" fill="#fff"/><rect x="13" y="6" width="2" height="2" fill="#fff"/><rect x="4" y="9" width="2" height="2" fill="#fff"/><rect x="7" y="9" width="2" height="2" fill="#fff"/><rect x="10" y="9" width="2" height="2" fill="#fff"/><rect x="13" y="9" width="2" height="2" fill="#fff"/><rect x="4" y="12" width="2" height="2" fill="#fff"/><rect x="7" y="12" width="2" height="2" fill="#fff"/><rect x="10" y="12" width="2" height="2" fill="#fff"/><rect x="13" y="12" width="2" height="2" fill="#fff"/><rect x="6" y="2" width="3.5" height="13" fill="#a9c6f2"/></g><path d="M0.5 8.5H6" stroke="#888" stroke-width="1"/><path d="M2.3 6.8L0.3 8.5L2.3 10.2" fill="none" stroke="#888" stroke-width="1"/></svg>
<svg class="abs" style="left:871px;top:181px" width="16" height="16" viewBox="0 0 16 16"><path d="M1.5 2V5.5H13.5V2" fill="none" stroke="#999" stroke-width="1.1"/><rect x="5" y="2" width="4.5" height="9" fill="#f6c8c8" stroke="#eab0b0" stroke-width="0.5"/><path d="M7.3 11V14.5" stroke="#999" stroke-width="1"/><path d="M5.8 13L7.3 15L8.8 13" fill="none" stroke="#999" stroke-width="1"/></svg>
<svg class="abs" style="left:893px;top:182px" width="17" height="14" viewBox="0 0 17 14"><g opacity="0.85"><rect x="0.5" y="0.5" width="16" height="13" fill="#dfe5f3" stroke="#a9b9d3" stroke-width="1"/><rect x="1" y="1" width="2.5" height="2.2" fill="#fff"/><rect x="4.5" y="1" width="5" height="2.2" fill="#fff"/><rect x="10.5" y="1" width="5.5" height="2.2" fill="#fff"/><rect x="1" y="4.3" width="2.5" height="2.5" fill="#fff"/><rect x="1" y="7.6" width="2.5" height="2.5" fill="#fff"/><rect x="1" y="10.9" width="2.5" height="2.1" fill="#fff"/></g></svg>
<svg class="abs" style="left:917px;top:182px" width="17" height="14" viewBox="0 0 17 14"><g opacity="0.85"><rect x="0.5" y="0.5" width="16" height="13" fill="#dfe5f3" stroke="#a9b9d3" stroke-width="1"/><rect x="1" y="1" width="2.5" height="2.2" fill="#fff"/><rect x="4.5" y="1" width="5" height="2.2" fill="#fff"/><rect x="10.5" y="1" width="5.5" height="2.2" fill="#fff"/><rect x="1" y="4.3" width="2.5" height="2.5" fill="#fff"/><rect x="1" y="7.6" width="2.5" height="2.5" fill="#fff"/><rect x="1" y="10.9" width="2.5" height="2.1" fill="#fff"/><rect x="13.5" y="4.3" width="2.5" height="2.5" fill="#fff"/><rect x="13.5" y="7.6" width="2.5" height="2.5" fill="#fff"/><rect x="13.5" y="10.9" width="2.5" height="2.1" fill="#fff"/><rect x="4.5" y="10.9" width="8" height="2.1" fill="#fff"/><path d="M6 7.2H11" stroke="#fff" stroke-width="1.6"/><path d="M9.5 4.8L12.3 7.2L9.5 9.6Z" fill="#fff"/></g></svg>
<svg class="abs" style="left:941px;top:182px" width="17" height="14" viewBox="0 0 17 14"><g opacity="0.85"><rect x="0.5" y="0.5" width="16" height="13" fill="#dfe5f3" stroke="#a9b9d3" stroke-width="1"/><rect x="1" y="1" width="2.5" height="2.2" fill="#fff"/><rect x="4.5" y="1" width="5" height="2.2" fill="#fff"/><rect x="10.5" y="1" width="5.5" height="2.2" fill="#fff"/><rect x="1" y="4.3" width="2.5" height="2.5" fill="#fff"/><rect x="1" y="7.6" width="2.5" height="2.5" fill="#fff"/><rect x="1" y="10.9" width="2.5" height="2.1" fill="#fff"/><rect x="13.5" y="4.3" width="2.5" height="2.5" fill="#fff"/><rect x="13.5" y="7.6" width="2.5" height="2.5" fill="#fff"/><rect x="13.5" y="10.9" width="2.5" height="2.1" fill="#fff"/><path d="M8.5 4.5V9.5" stroke="#fff" stroke-width="1.6"/><path d="M6 8.5L8.5 11.8L11 8.5Z" fill="#fff"/></g></svg>
<svg class="abs" style="left:965px;top:182px" width="17" height="14" viewBox="0 0 17 14"><g opacity="0.85"><rect x="0.5" y="0.5" width="16" height="13" fill="#d4daf0" stroke="#a9b9d3" stroke-width="1"/><rect x="1" y="1" width="2.5" height="2.2" fill="#fff"/><rect x="4.5" y="1" width="5" height="2.2" fill="#fff"/><rect x="10.5" y="1" width="5.5" height="2.2" fill="#fff"/><rect x="1" y="4.3" width="2.5" height="2.5" fill="#fff"/><rect x="1" y="7.6" width="2.5" height="2.5" fill="#fff"/><rect x="1" y="10.9" width="2.5" height="2.1" fill="#fff"/><path d="M4 6.9H16M4 10.2H16M7.5 3.5V13M11.5 3.5V13" stroke="#eef0f8" stroke-width="0.9"/></g></svg>
<svg class="abs" style="left:328px;top:205px" width="17" height="16" viewBox="0 0 17 16"><g opacity="0.7"><rect x="1" y="1" width="15" height="13" fill="#c8dcf2" stroke="#9ab8dc" stroke-width="1"/><path d="M1 4.3H16M1 7.5H16M1 10.7H16" stroke="#fff" stroke-width="0.9"/><rect x="1.5" y="1.5" width="2.5" height="12" fill="#fff"/><rect x="13" y="1.5" width="2.5" height="12" fill="#fff"/><path d="M1.5 4.3H4M1.5 7.5H4M1.5 10.7H4M13 4.3H15.5M13 7.5H15.5M13 10.7H15.5" stroke="#9ab8dc" stroke-width="0.9"/></g></svg>
<svg class="abs" style="left:352px;top:205px" width="17" height="16" viewBox="0 0 17 16"><g opacity="0.7"><rect x="1" y="1" width="15" height="13" fill="#c8dcf2" stroke="#9ab8dc" stroke-width="1"/><path d="M6.5 1V14M10.5 1V14" stroke="#fff" stroke-width="0.9"/><rect x="1.5" y="1.5" width="2.5" height="12" fill="#fff"/><rect x="13" y="1.5" width="2.5" height="12" fill="#fff"/><path d="M1.5 4.3H4M1.5 7.5H4M1.5 10.7H4M13 4.3H15.5M13 7.5H15.5M13 10.7H15.5" stroke="#9ab8dc" stroke-width="0.9"/></g></svg>
<svg class="abs" style="left:377px;top:205px" width="16" height="16" viewBox="0 0 16 16"><g opacity="0.5"><path d="M1.5 1H9.5L12.5 4V15H1.5Z" fill="#f8f8f8" stroke="#d8d8d8" stroke-width="0.9"/><rect x="6" y="9" width="2" height="6" fill="#a8d890"/><rect x="8.5" y="10" width="2" height="5" fill="#f0b890"/><rect x="11" y="11.5" width="2" height="3.5" fill="#9ad0ec"/></g></svg>
<div class="abs" style="left:400px;top:204px;width:1px;height:18px;background:#c8c8c8"></div>
<svg class="abs" style="left:410px;top:205px" width="16" height="17" viewBox="0 0 16 17"><rect x="3" y="0.8" width="10" height="5" fill="#f4f4f4" stroke="#777" stroke-width="0.9"/><path d="M5 2.5H11M5 4H10" stroke="#aaa" stroke-width="0.6"/><rect x="0.5" y="5.5" width="15" height="6.5" rx="1.5" fill="#333"/><path d="M1 7.5H15M1 9.5H15" stroke="#666" stroke-width="0.7"/><rect x="3" y="11" width="10" height="5.3" fill="#fff" stroke="#555" stroke-width="0.9"/><rect x="4" y="12.5" width="8" height="1.4" fill="#2a6ae0"/></svg>
<div class="abs" style="left:330px;top:238px;width:604px;height:26px;background:#f3f3f3"></div>
<div class="abs" style="left:329px;top:237px;width:606px;height:1px;background:#111"></div>
<div class="abs" style="left:329px;top:264px;width:606px;height:1px;background:#111"></div>
<div class="abs" style="left:329px;top:291px;width:606px;height:1px;background:#6a6a6a"></div>
<div class="abs" style="left:329px;top:318px;width:606px;height:1px;background:#6a6a6a"></div>
<div class="abs" style="left:329px;top:345px;width:606px;height:1px;background:#6a6a6a"></div>
<div class="abs" style="left:329px;top:372px;width:606px;height:1px;background:#6a6a6a"></div>
<div class="abs" style="left:329px;top:399px;width:606px;height:1px;background:#6a6a6a"></div>
<div class="abs" style="left:329px;top:426px;width:606px;height:1px;background:#6a6a6a"></div>
<div class="abs" style="left:329px;top:237px;width:1px;height:27px;background:#111"></div>
<div class="abs" style="left:450px;top:237px;width:1px;height:27px;background:#111"></div>
<div class="abs" style="left:571px;top:237px;width:1px;height:27px;background:#111"></div>
<div class="abs" style="left:692px;top:237px;width:1px;height:27px;background:#111"></div>
<div class="abs" style="left:813px;top:237px;width:1px;height:27px;background:#111"></div>
<div class="abs" style="left:934px;top:237px;width:1px;height:27px;background:#111"></div>
<div class="abs" style="left:329px;top:264px;width:1px;height:163px;background:#6a6a6a"></div>
<div class="abs" style="left:934px;top:264px;width:1px;height:163px;background:#6a6a6a"></div>
<div class="abs" style="left:450px;top:264px;width:1px;height:108px;background:#6a6a6a"></div>
<div class="abs" style="left:571px;top:264px;width:1px;height:108px;background:#6a6a6a"></div>
<div class="abs" style="left:692px;top:264px;width:1px;height:108px;background:#6a6a6a"></div>
<div class="abs" style="left:813px;top:264px;width:1px;height:108px;background:#6a6a6a"></div>
<div class="abs" style="left:571px;top:372px;width:1px;height:55px;background:#6a6a6a"></div>
<div class="abs" style="left:692px;top:372px;width:1px;height:27px;background:#6a6a6a"></div>
<div class="abs" style="left:813px;top:372px;width:1px;height:27px;background:#6a6a6a"></div>
<div class="abs th" style="left:330px;top:238px;width:120px">货品名称</div>
<div class="abs th" style="left:451px;top:238px;width:120px">主单位</div>
<div class="abs th" style="left:572px;top:238px;width:120px">折后金额</div>
<div class="abs th" style="left:693px;top:238px;width:120px">单位数量</div>
<div class="abs th" style="left:814px;top:238px;width:120px">金额</div>
<div class="abs tdc" style="left:330px;top:265px;width:120px"><span style="display:inline-block;transform:scaleX(1.67);transform-origin:92% 50%">【</span>货品名称<span style="display:inline-block;transform:scaleX(1.67);transform-origin:8% 50%">】</span></div>
<div class="abs tdc" style="left:451px;top:265px;width:120px"><span style="display:inline-block;transform:scaleX(1.67);transform-origin:92% 50%">【</span>主单位<span style="display:inline-block;transform:scaleX(1.67);transform-origin:8% 50%">】</span></div>
<div class="abs tdc" style="left:572px;top:265px;width:120px"><span style="display:inline-block;transform:scaleX(1.67);transform-origin:92% 50%">【</span>折后金额<span style="display:inline-block;transform:scaleX(1.67);transform-origin:8% 50%">】</span></div>
<div class="abs tdc" style="left:693px;top:265px;width:120px"><span style="display:inline-block;transform:scaleX(1.67);transform-origin:92% 50%">【</span>单位数量<span style="display:inline-block;transform:scaleX(1.67);transform-origin:8% 50%">】</span></div>
<div class="abs tdc" style="left:814px;top:265px;width:120px"><span style="display:inline-block;transform:scaleX(1.67);transform-origin:92% 50%">【</span>金额<span style="display:inline-block;transform:scaleX(1.67);transform-origin:8% 50%">】</span></div>
<div class="abs tdc" style="left:330px;top:292px;width:120px"><span style="display:inline-block;transform:scaleX(1.67);transform-origin:92% 50%">【</span>货品名称<span style="display:inline-block;transform:scaleX(1.67);transform-origin:8% 50%">】</span></div>
<div class="abs tdc" style="left:451px;top:292px;width:120px"><span style="display:inline-block;transform:scaleX(1.67);transform-origin:92% 50%">【</span>主单位<span style="display:inline-block;transform:scaleX(1.67);transform-origin:8% 50%">】</span></div>
<div class="abs tdc" style="left:572px;top:292px;width:120px"><span style="display:inline-block;transform:scaleX(1.67);transform-origin:92% 50%">【</span>折后金额<span style="display:inline-block;transform:scaleX(1.67);transform-origin:8% 50%">】</span></div>
<div class="abs tdc" style="left:693px;top:292px;width:120px"><span style="display:inline-block;transform:scaleX(1.67);transform-origin:92% 50%">【</span>单位数量<span style="display:inline-block;transform:scaleX(1.67);transform-origin:8% 50%">】</span></div>
<div class="abs tdc" style="left:814px;top:292px;width:120px"><span style="display:inline-block;transform:scaleX(1.67);transform-origin:92% 50%">【</span>金额<span style="display:inline-block;transform:scaleX(1.67);transform-origin:8% 50%">】</span></div>
<div class="abs tdc" style="left:330px;top:319px;width:120px"><span style="display:inline-block;transform:scaleX(1.67);transform-origin:92% 50%">【</span>货品名称<span style="display:inline-block;transform:scaleX(1.67);transform-origin:8% 50%">】</span></div>
<div class="abs tdc" style="left:451px;top:319px;width:120px"><span style="display:inline-block;transform:scaleX(1.67);transform-origin:92% 50%">【</span>主单位<span style="display:inline-block;transform:scaleX(1.67);transform-origin:8% 50%">】</span></div>
<div class="abs tdc" style="left:572px;top:319px;width:120px"><span style="display:inline-block;transform:scaleX(1.67);transform-origin:92% 50%">【</span>折后金额<span style="display:inline-block;transform:scaleX(1.67);transform-origin:8% 50%">】</span></div>
<div class="abs tdc" style="left:693px;top:319px;width:120px"><span style="display:inline-block;transform:scaleX(1.67);transform-origin:92% 50%">【</span>单位数量<span style="display:inline-block;transform:scaleX(1.67);transform-origin:8% 50%">】</span></div>
<div class="abs tdc" style="left:814px;top:319px;width:120px"><span style="display:inline-block;transform:scaleX(1.67);transform-origin:92% 50%">【</span>金额<span style="display:inline-block;transform:scaleX(1.67);transform-origin:8% 50%">】</span></div>
<div class="abs tdc" style="left:330px;top:346px;width:120px"><span style="display:inline-block;transform:scaleX(1.67);transform-origin:92% 50%">【</span>货品名称<span style="display:inline-block;transform:scaleX(1.67);transform-origin:8% 50%">】</span></div>
<div class="abs tdc" style="left:451px;top:346px;width:120px"><span style="display:inline-block;transform:scaleX(1.67);transform-origin:92% 50%">【</span>主单位<span style="display:inline-block;transform:scaleX(1.67);transform-origin:8% 50%">】</span></div>
<div class="abs tdc" style="left:572px;top:346px;width:120px"><span style="display:inline-block;transform:scaleX(1.67);transform-origin:92% 50%">【</span>折后金额<span style="display:inline-block;transform:scaleX(1.67);transform-origin:8% 50%">】</span></div>
<div class="abs tdc" style="left:693px;top:346px;width:120px"><span style="display:inline-block;transform:scaleX(1.67);transform-origin:92% 50%">【</span>单位数量<span style="display:inline-block;transform:scaleX(1.67);transform-origin:8% 50%">】</span></div>
<div class="abs tdc" style="left:814px;top:346px;width:120px"><span style="display:inline-block;transform:scaleX(1.67);transform-origin:92% 50%">【</span>金额<span style="display:inline-block;transform:scaleX(1.67);transform-origin:8% 50%">】</span></div>
<div class="abs tdc" style="left:330px;top:373px;width:241px">合计：</div>
<div class="abs tdc" style="left:814px;top:373px;width:120px"><span style="display:inline-block;transform:scaleX(1.67);transform-origin:92% 50%">【</span>金额合计<span style="display:inline-block;transform:scaleX(1.67);transform-origin:8% 50%">】</span></div>
<div class="abs tdc" style="left:330px;top:400px;width:241px">大写合计：</div>
<div class="abs tdc" style="left:572px;top:400px;width:120px;text-align:left;padding-left:10px"><span style="display:inline-block;transform:scaleX(1.67);transform-origin:92% 50%">【</span>大写合计<span style="display:inline-block;transform:scaleX(1.67);transform-origin:8% 50%">】</span></div>
<div class="abs att" style="left:330px;top:437px">附件：</div>
<div class="abs att" style="left:330px;top:460px"><span style="display:inline-block;transform:translateX(-4px) scaleX(1.5);transform-origin:80% 50%">【</span>附件图片<span style="display:inline-block;transform:translateX(1px) scaleX(1.6);transform-origin:20% 50%">】</span></div>
<div class="abs" style="left:425px;top:461px;width:1px;height:16px;background:#000"></div>
</body>
</html>
